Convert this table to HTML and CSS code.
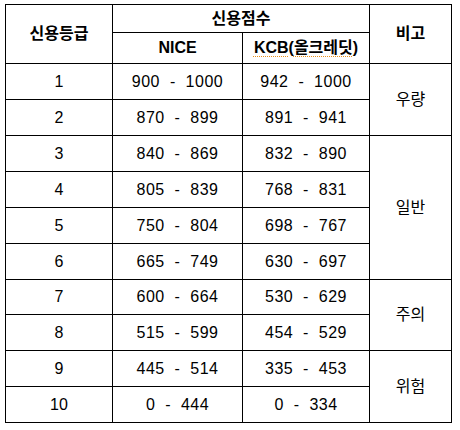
FILE: index.html
```html
<!DOCTYPE html>
<html lang="ko">
<head>
<meta charset="utf-8">
<title>신용등급</title>
<link rel="stylesheet" href="styles.css">
</head>
<body>
<div class="grade-table">
  <div class="cell head c1 r-head2">신용등급</div>
  <div class="cell head c23">신용점수</div>
  <div class="cell head c4 r-head2">비고</div>
  <div class="cell head">NICE</div>
  <div class="cell head"><span class="spell">KCB</span>(<span class="spell">올크레딧</span>)</div>

  <div class="cell">1</div><div class="cell num">900  -  1000</div><div class="cell num">942  -  1000</div>
  <div class="cell note span2">우량</div>
  <div class="cell">2</div><div class="cell num">870  -  899</div><div class="cell num">891  -  941</div>

  <div class="cell">3</div><div class="cell num">840  -  869</div><div class="cell num">832  -  890</div>
  <div class="cell note span4">일반</div>
  <div class="cell">4</div><div class="cell num">805  -  839</div><div class="cell num">768  -  831</div>
  <div class="cell">5</div><div class="cell num">750  -  804</div><div class="cell num">698  -  767</div>
  <div class="cell">6</div><div class="cell num">665  -  749</div><div class="cell num">630  -  697</div>

  <div class="cell">7</div><div class="cell num">600  -  664</div><div class="cell num">530  -  629</div>
  <div class="cell note span2">주의</div>
  <div class="cell">8</div><div class="cell num">515  -  599</div><div class="cell num">454  -  529</div>

  <div class="cell">9</div><div class="cell num">445  -  514</div><div class="cell num">335  -  453</div>
  <div class="cell note span2">위험</div>
  <div class="cell">10</div><div class="cell num">0  -  444</div><div class="cell num">0  -  334</div>
</div>
</body>
</html>
```
FILE: styles.css
```css
html, body {
  margin: 0;
  padding: 0;
  background: #ffffff;
}

body {
  padding: 4px 0 0 5px;
  font-family: "Liberation Sans", "Noto Sans CJK KR", sans-serif;
  font-size: 16px;
  color: #000000;
}

.grade-table {
  display: grid;
  grid-template-columns: 106px 129px 126px 81px;
  grid-template-rows: 27px 30px 35px 35px 35px 35px 35px 35px 34px 35px 35px 35px;
  gap: 1px;
  padding: 1px;
  background: #000000;
  width: max-content;
}

.cell {
  background: #ffffff;
  display: flex;
  align-items: center;
  justify-content: center;
  white-space: pre;
  line-height: 1;
}

.num {
  letter-spacing: 0.5px;
}

.head {
  font-weight: bold;
}

.c1 {
  grid-column: 1;
}

.c23 {
  grid-column: 2 / span 2;
}

.c4 {
  grid-column: 4;
}

.r-head2 {
  grid-row: 1 / span 2;
}

.note {
  grid-column: 4;
}

.span2 {
  grid-row: span 2;
}

.span4 {
  grid-row: span 4;
}

.spell {
  text-decoration: underline dotted #e8901c;
  text-underline-offset: 3px;
  text-decoration-thickness: 1px;
}
```
